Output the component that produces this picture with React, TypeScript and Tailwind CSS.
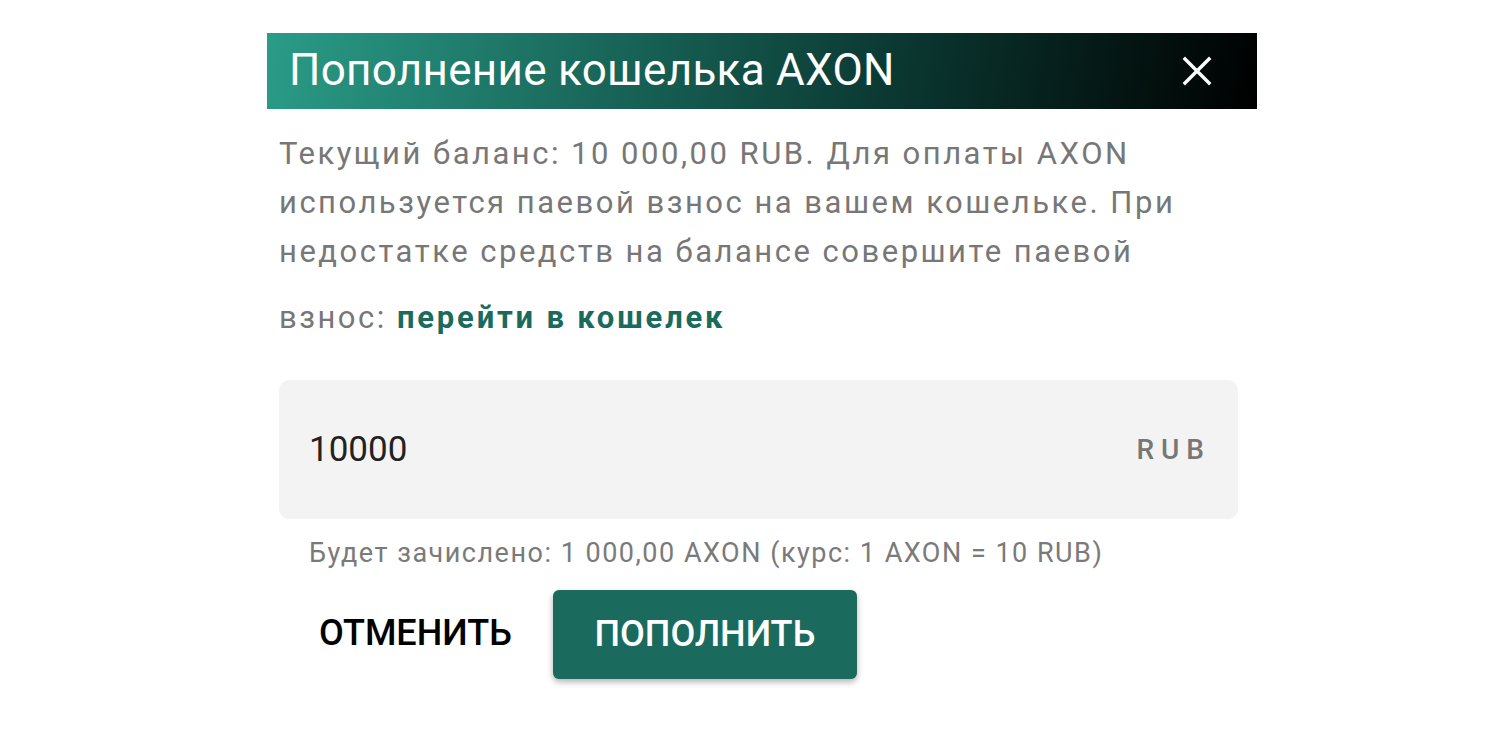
import React, { useState } from 'react';

const App: React.FC = () => {
  const [amount, setAmount] = useState('10000');

  return (
    <div className="min-h-screen w-full bg-white" style={{ fontFamily: 'Roboto, "Noto Sans", sans-serif' }}>
      <div className="ml-[267px] w-[990px] pt-[33px]">
        {/* Header */}
        <div className="flex h-[76px] items-center justify-between bg-[linear-gradient(100deg,#2a9c87_0%,#1b6d5f_30%,#0b3a33_62%,#000_100%)] pb-[3px] pl-[22px] pr-[45px]">
          <span className="text-[44px] leading-none tracking-[0.3px] text-white">Пополнение кошелька AXON</span>
          <svg width="30" height="30" viewBox="0 0 30 30" className="mt-[3px] text-white">
            <path d="M3 3 L27 27 M27 3 L3 27" stroke="currentColor" strokeWidth="3.4" strokeLinecap="square" />
          </svg>
        </div>

        {/* Body */}
        <div className="pl-[12px] pr-[19px]">
          <p className="mt-[20px] text-[31px] leading-[49px] tracking-[2.5px] text-[#777]">
            Текущий баланс: 10 000,00 RUB. Для оплаты AXON
            <br />
            используется паевой взнос на вашем кошельке. При
            <br />
            недостатке средств на балансе совершите паевой
            <br />
            взнос:{' '}
            <a href="#" className="inline-block pt-[17px] font-bold tracking-[2.8px] text-[#1a6b5d]">
              перейти в кошелек
            </a>
          </p>

          <div className="mt-[38px] flex h-[139px] items-center rounded-[10px] bg-[#f3f3f3] pl-[30px] pr-[27px]">
            <input
              value={amount}
              onChange={(e) => setAmount(e.target.value)}
              className="h-[35px] min-w-0 flex-1 bg-transparent text-[35px] leading-none text-[#222] outline-none"
            />
            <span className="text-[28px] font-medium leading-none tracking-[7px] text-[#777]">RUB</span>
          </div>

          <p className="mt-[18px] pl-[30px] text-[27px] leading-[32px] tracking-[1.5px] text-[#7a7a7a]">
            Будет зачислено: 1 000,00 AXON (курс: 1 AXON = 10 RUB)
          </p>

          <div className="mt-[21px] flex items-center">
            <button className="ml-[40px] pb-[4px] text-[36px] font-medium leading-none text-black">ОТМЕНИТЬ</button>
            <button className="ml-[41px] flex h-[89px] w-[304px] items-center justify-center rounded-[6px] bg-[#1a6b5e] pb-[2px] text-[36px] font-medium leading-none text-white shadow-[0_3px_6px_rgba(0,0,0,0.3)]">
              ПОПОЛНИТЬ
            </button>
          </div>
        </div>
      </div>
    </div>
  );
};

export default App;
